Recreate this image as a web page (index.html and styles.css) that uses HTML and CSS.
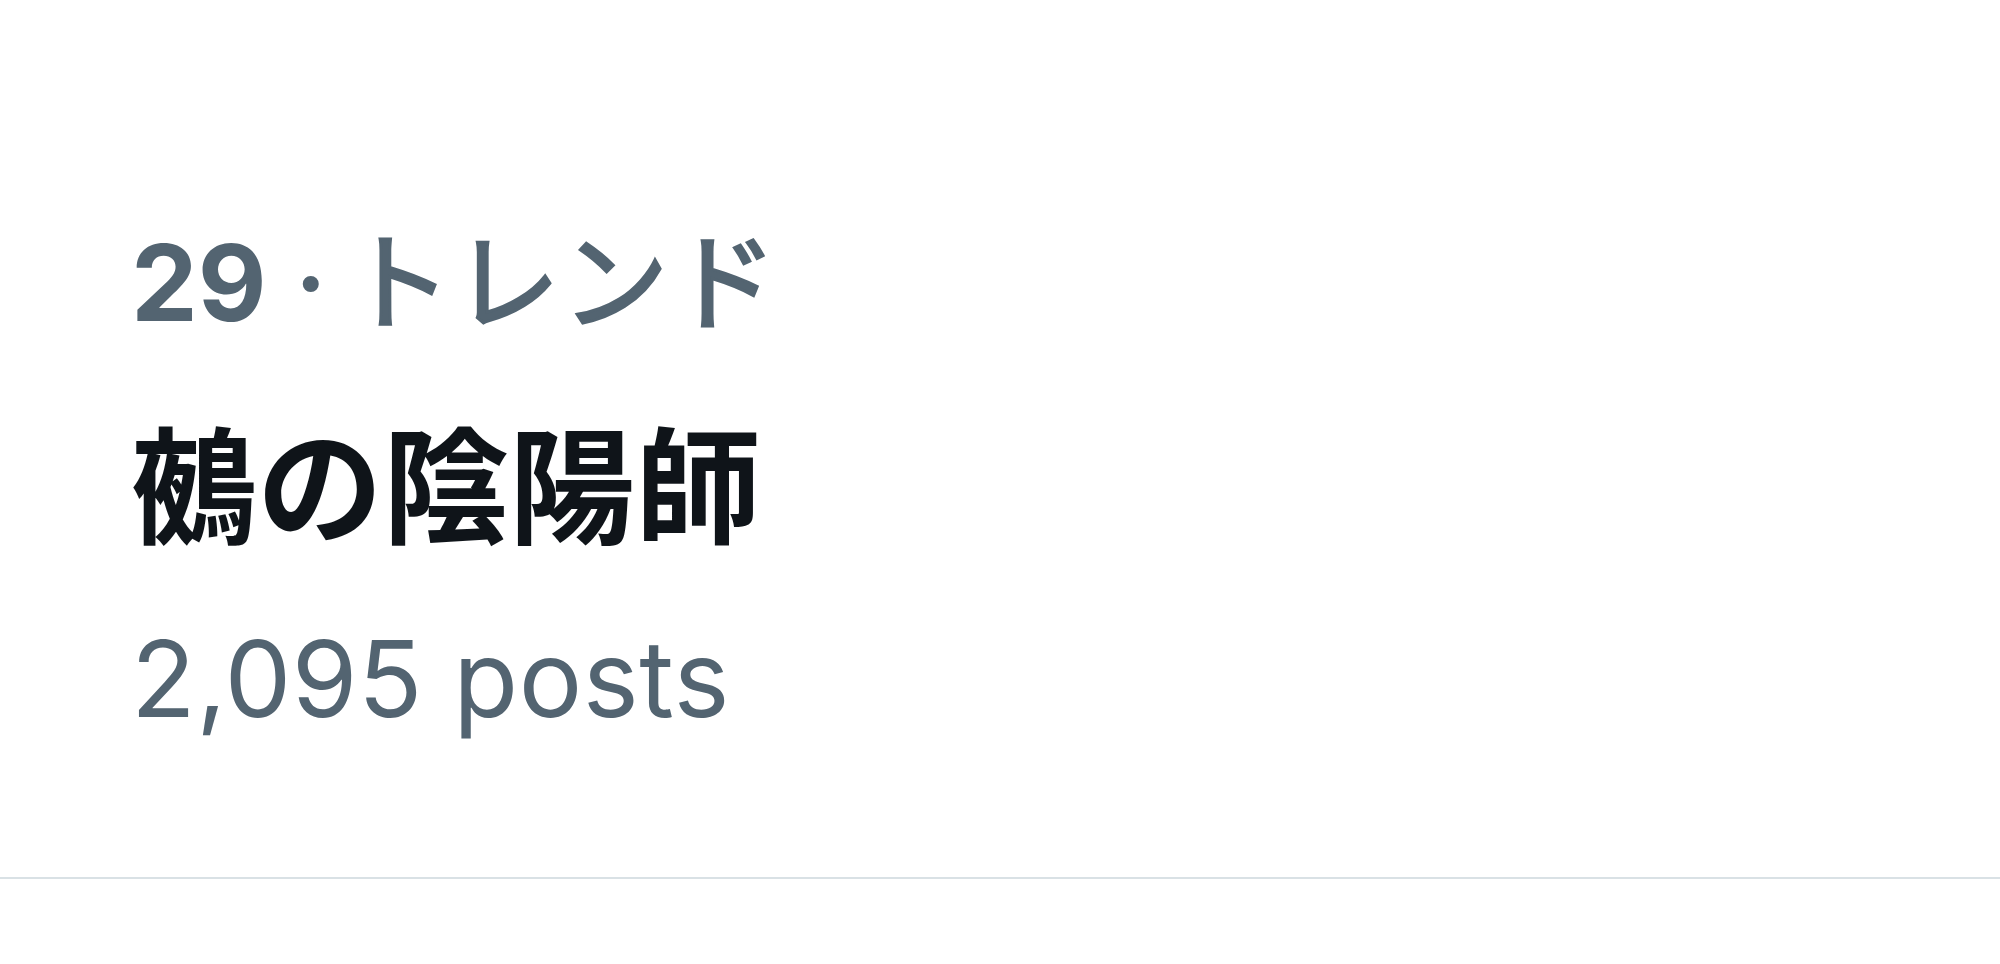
FILE: index.html
```html
<!DOCTYPE html>
<html>
<head lang="ja">
    <meta charset="UTF-8">
    <title>トレンド</title>
    <link rel="stylesheet" href="styles.css">
</head>
<body>
    <!--トレンド項目-->
    <div class="trend">
        <div class="meta"><span class="rank">29</span><span class="dot">·</span><span class="kind">トレンド</span></div>
        <div class="title">鵺の陰陽師</div>
        <div class="count">2,095 posts</div>
    </div>
</body>
</html>
```
FILE: styles.css
```css
* {
    padding: 0;
    margin: 0;
    box-sizing: border-box;
}

body {
    background: #fff;
    font-family: "Inter", "Noto Sans CJK JP", sans-serif;
}

.trend {
    padding: 217px 131px 133px;
    border-bottom: 2px solid #d9e1e5;
}

.meta {
    font-size: 106px;
    line-height: 131px;
    color: #536471;
}

.meta .rank {
    font-weight: 700;
}

.meta .dot {
    margin: 0 19px 0 29px;
    -webkit-text-stroke: 2px #536471;
}

.meta .kind {
    letter-spacing: 2.5px;
    -webkit-text-stroke: 3px #536471;
}

.title {
    margin-top: 58px;
    font-size: 126px;
    line-height: 164px;
    font-weight: 700;
    color: #0f1419;
}

.count {
    margin-top: 43px;
    font-size: 106px;
    line-height: 131px;
    letter-spacing: 0.5px;
    color: #536471;
}
```
